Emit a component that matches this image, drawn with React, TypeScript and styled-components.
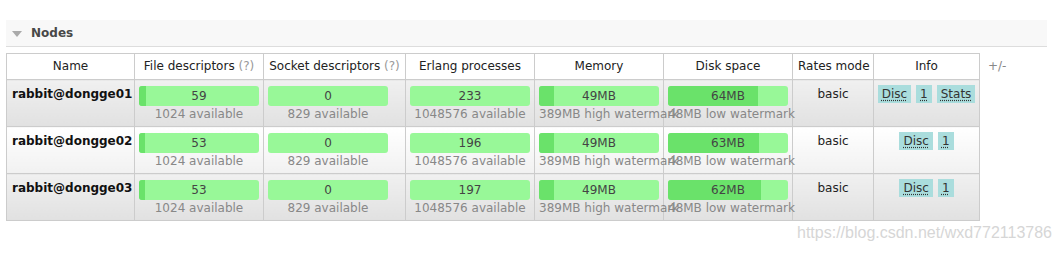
import React from "react";
import styled, { createGlobalStyle } from "styled-components";

const GlobalStyle = createGlobalStyle`
    html, body {
        margin: 0;
        padding: 0;
        background: #fff;
    }
    body {
        font-family: "DejaVu Sans", Verdana, sans-serif;
        font-size: 12px;
        color: #222;
    }
`;

const Page = styled.div`
    position: relative;
    height: 253px;
    padding: 20px 14px 0 6px;
    box-sizing: border-box;
    overflow: hidden;
`;

const SectionHeader = styled.div`
    display: flex;
    align-items: center;
    gap: 9px;
    height: 26px;
    padding-left: 6px;
    background: #f8f8f8;
    border-bottom: 1px solid #ddd;
`;

const Arrow = styled.span`
    width: 0;
    height: 0;
    border-left: 5px solid transparent;
    border-right: 5px solid transparent;
    border-top: 6px solid #aaa;
    margin-top: 1px;
`;

const SectionTitle = styled.h2`
    margin: 0;
    font-size: 12px;
    font-weight: bold;
    color: #484848;
`;

const Table = styled.table<{ $w: number }>`
    width: ${p => p.$w}px;
    margin-top: 6px;
    border-collapse: collapse;
    table-layout: fixed;
`;

const Col = styled.col<{ $w: number }>`
    width: ${p => p.$w}px;
`;

const Th = styled.th`
    border: 1px solid #ccc;
    background: #fff;
    padding: 4px 5px 5px;
    line-height: 16px;
    font-weight: normal;
    color: #222;
    white-space: nowrap;
    text-align: center;
`;

const PlusMinus = styled.th`
    padding: 4px 8px 5px;
    line-height: 16px;
    font-weight: normal;
    color: #888;
    text-align: left;
`;

const Help = styled.span`
    color: #999;
`;

const Td = styled.td<{ $alt: boolean }>`
    border: 1px solid #ccc;
    padding: 6px 4px 4px;
    vertical-align: top;
    text-align: center;
    line-height: 16px;
    white-space: nowrap;
    overflow: visible;
    background: ${p => p.$alt
        ? "linear-gradient(#f0f0f0, #e1e1e1)"
        : "linear-gradient(#ffffff, #f1f1f1)"};
`;

const NameCell = styled(Td)`
    padding-left: 5px;
    text-align: left;
    font-weight: bold;
    color: #111;
`;

const InfoCell = styled(Td)`
    padding-top: 5px;
`;

// bars sit at the left edge of their cell; the caption is centred under the bar
const Resource = styled.div`
    width: 120px;
    text-align: center;
`;

const Bar = styled.div`
    position: relative;
    height: 20px;
    border-radius: 3px;
    background: #98f898;
    overflow: hidden;
`;

const BarFill = styled.div`
    position: absolute;
    left: 0;
    top: 0;
    bottom: 0;
    background: #6ae26a;
`;

const BarLabel = styled.div`
    position: relative;
    line-height: 20px;
    color: #444;
`;

const SubLabel = styled.div`
    font-size: 12px;
    line-height: 16px;
    color: #888;
    white-space: nowrap;
`;

const Badges = styled.div`
    display: flex;
    justify-content: center;
    gap: 5px;
`;

const Badge = styled.abbr`
    display: inline-block;
    height: 18px;
    line-height: 18px;
    padding: 0 4px;
    background: #aadddd;
    color: #333;
    text-decoration: underline dotted #333;
    text-underline-offset: 2px;
`;

const Watermark = styled.div`
    position: absolute;
    left: 797px;
    top: 224px;
    font-family: "Liberation Sans", Arial, sans-serif;
    font-size: 16px;
    color: #d6d6d6;
    white-space: nowrap;
`;

interface ResourceBarProps {
    label: string;
    sub: string;
    fill: number;
}

function ResourceBar(props: ResourceBarProps): JSX.Element {
    const { label, sub, fill } = props;
    return <Resource>
        <Bar>
            {fill > 0 && <BarFill style={{ width: `${Math.round(fill * 120)}px` }} />}
            <BarLabel>{label}</BarLabel>
        </Bar>
        <SubLabel>{sub}</SubLabel>
    </Resource>;
}

interface Node {
    name: string;
    fds: number;
    sockets: number;
    procs: number;
    memMB: number;
    diskMB: number;
    badges: string[];
}

const nodes: Node[] = [
    { name: "rabbit@dongge01", fds: 59, sockets: 0, procs: 233, memMB: 49, diskMB: 64, badges: ["Disc", "1", "Stats"] },
    { name: "rabbit@dongge02", fds: 53, sockets: 0, procs: 196, memMB: 49, diskMB: 63, badges: ["Disc", "1"] },
    { name: "rabbit@dongge03", fds: 53, sockets: 0, procs: 197, memMB: 49, diskMB: 62, badges: ["Disc", "1"] },
];

const FD_TOTAL = 1024;
const SOCKET_TOTAL = 829;
const PROC_TOTAL = 1048576;
const MEM_HIGH = 389;
const DISK_LOW = 48;

const columns = [128, 129, 142, 129, 129, 129, 81, 106, 40];
const tableWidth = columns.reduce((a, b) => a + b, 0);

export default function App(): JSX.Element {
    return <Page>
        <GlobalStyle />
        <SectionHeader>
            <Arrow />
            <SectionTitle>Nodes</SectionTitle>
        </SectionHeader>
        <Table $w={tableWidth}>
            <colgroup>
                {columns.map((w, i) => <Col key={i} $w={w} />)}
            </colgroup>
            <thead>
                <tr>
                    <Th>Name</Th>
                    <Th>File descriptors <Help>(?)</Help></Th>
                    <Th>Socket descriptors <Help>(?)</Help></Th>
                    <Th>Erlang processes</Th>
                    <Th>Memory</Th>
                    <Th>Disk space</Th>
                    <Th>Rates mode</Th>
                    <Th>Info</Th>
                    <PlusMinus>+/-</PlusMinus>
                </tr>
            </thead>
            <tbody>
                {nodes.map((node, index) => {
                    const alt = index % 2 === 0;
                    return <tr key={node.name}>
                        <NameCell $alt={alt}>{node.name}</NameCell>
                        <Td $alt={alt}>
                            <ResourceBar label={String(node.fds)} sub={`${FD_TOTAL} available`} fill={node.fds / FD_TOTAL} />
                        </Td>
                        <Td $alt={alt}>
                            <ResourceBar label={String(node.sockets)} sub={`${SOCKET_TOTAL} available`} fill={node.sockets / SOCKET_TOTAL} />
                        </Td>
                        <Td $alt={alt}>
                            <ResourceBar label={String(node.procs)} sub={`${PROC_TOTAL} available`} fill={node.procs / PROC_TOTAL} />
                        </Td>
                        <Td $alt={alt}>
                            <ResourceBar label={`${node.memMB}MB`} sub={`${MEM_HIGH}MB high watermark`} fill={node.memMB / MEM_HIGH} />
                        </Td>
                        <Td $alt={alt}>
                            <ResourceBar label={`${node.diskMB}MB`} sub={`${DISK_LOW}MB low watermark`} fill={DISK_LOW / node.diskMB} />
                        </Td>
                        <Td $alt={alt}>basic</Td>
                        <InfoCell $alt={alt}>
                            <Badges>
                                {node.badges.map(b => <Badge key={b}>{b}</Badge>)}
                            </Badges>
                        </InfoCell>
                    </tr>;
                })}
            </tbody>
        </Table>
        <Watermark>https://blog.csdn.net/wxd772113786</Watermark>
    </Page>;
}
